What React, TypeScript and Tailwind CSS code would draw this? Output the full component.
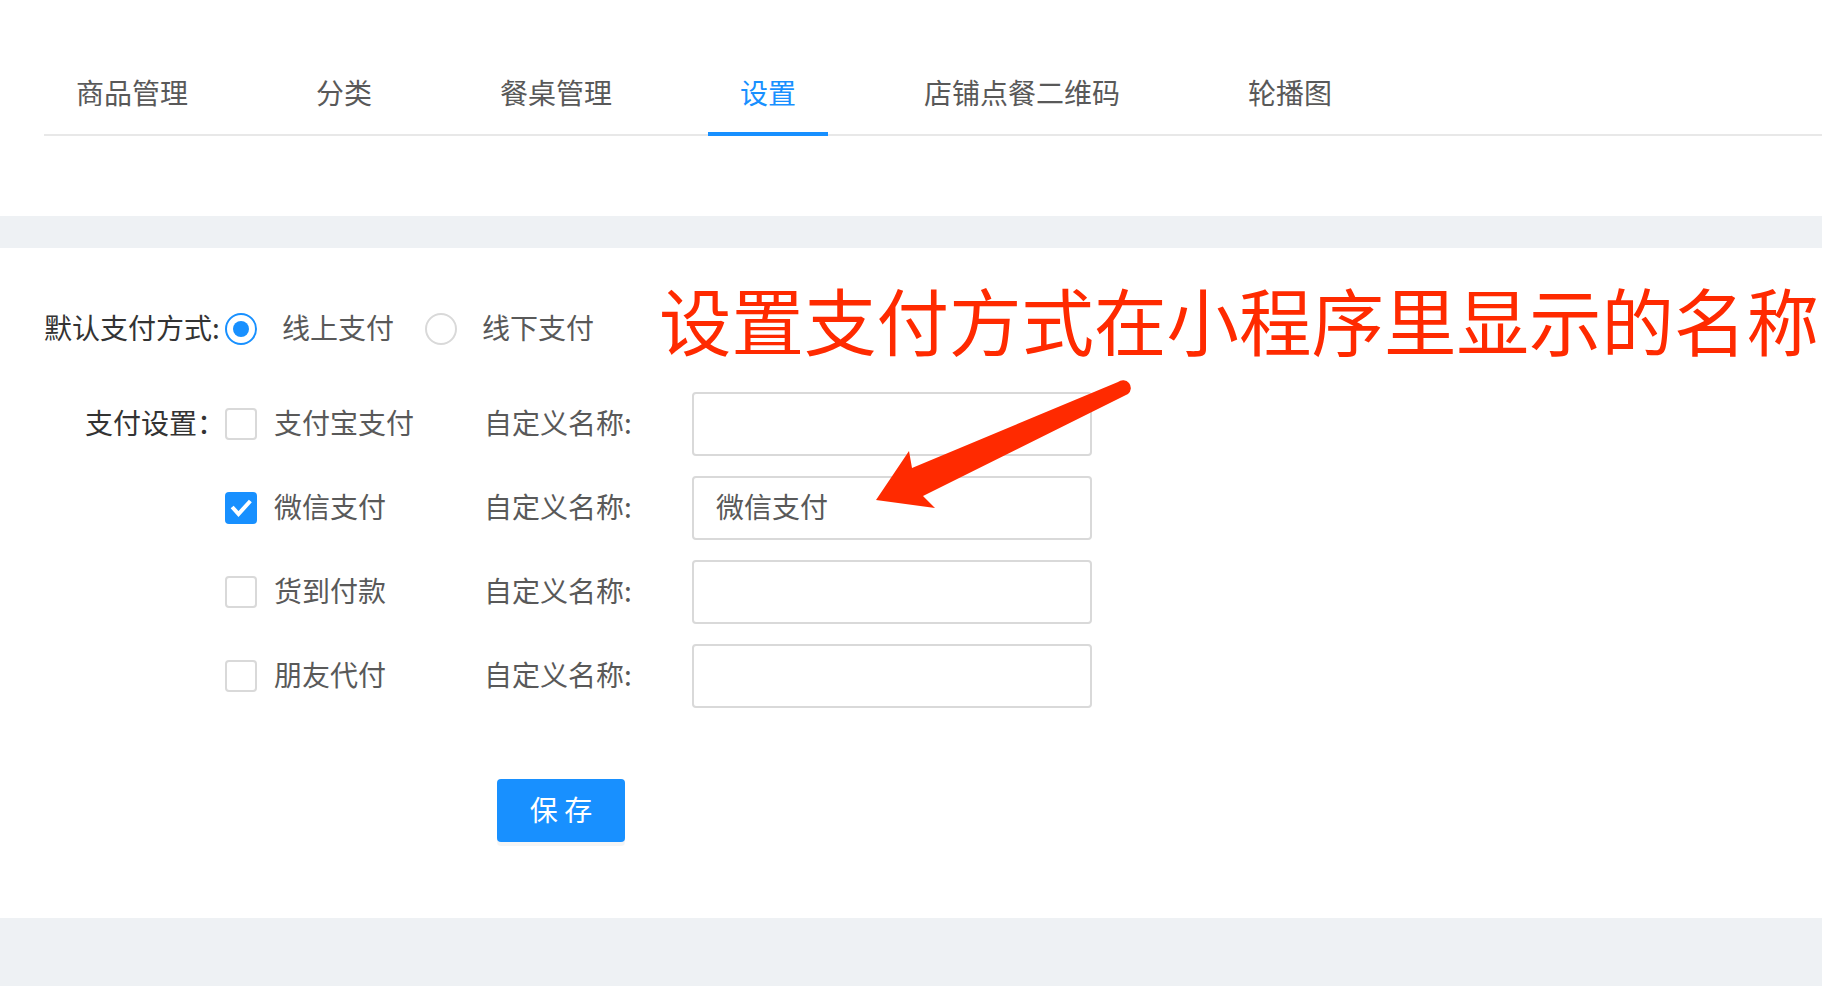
import { useState } from 'react';

const font = { fontFamily: '"Noto Sans CJK SC", "Noto Sans", sans-serif' };

const tabs = ['商品管理', '分类', '餐桌管理', '设置', '店铺点餐二维码', '轮播图'];

const payments = [
  { id: 'alipay', label: '支付宝支付', checked: false, name: '' },
  { id: 'wechat', label: '微信支付', checked: true, name: '微信支付' },
  { id: 'cod', label: '货到付款', checked: false, name: '' },
  { id: 'friend', label: '朋友代付', checked: false, name: '' },
];

const Radio = ({ checked }: { checked: boolean }) => (
  <span
    className={`flex h-[32px] w-[32px] shrink-0 items-center justify-center rounded-full border-2 bg-white ${
      checked ? 'border-[#1890ff]' : 'border-[#d9d9d9]'
    }`}
  >
    {checked && <span className="h-[16px] w-[16px] rounded-full bg-[#1890ff]" />}
  </span>
);

const Checkbox = ({ checked }: { checked: boolean }) =>
  checked ? (
    <span className="flex h-[32px] w-[32px] shrink-0 items-center justify-center rounded-[4px] bg-[#1890ff]">
      <svg width="32" height="32" viewBox="0 0 32 32" fill="none">
        <polyline points="8.5,16.5 13.5,22 24,10.5" stroke="#fff" strokeWidth="4" strokeLinecap="square" />
      </svg>
    </span>
  ) : (
    <span className="h-[32px] w-[32px] shrink-0 rounded-[4px] border-2 border-[#d9d9d9] bg-white" />
  );

export default function App() {
  const [active] = useState(3);

  return (
    <div className="min-h-screen bg-[#eef1f4] text-[28px]" style={font}>
      {/* tabs */}
      <div className="bg-white pb-[80px] pl-[44px] pt-[54px]">
        <div className="flex border-b-2 border-[#e8e8e8]">
          {tabs.map((t, i) => (
            <div
              key={t}
              className={`-mb-[2px] mr-[64px] flex h-[82px] items-center border-b-4 px-[32px] pb-[3px] leading-none ${
                i === active ? 'border-[#1890ff] text-[#1890ff]' : 'border-transparent text-[#595959]'
              }`}
            >
              {t}
            </div>
          ))}
        </div>
      </div>

      {/* settings card */}
      <div className="relative mt-[32px] bg-white px-[44px] pb-[76px] pt-[49px]">
        <div className="flex h-[64px] items-center">
          <div className="w-[181px] whitespace-nowrap pb-[5px] text-[#333]">默认支付方式:</div>
          <div className="flex items-center">
            <Radio checked />
            <span className="ml-[25px] mr-[31px] pb-[5px] text-[#595959]">线上支付</span>
            <Radio checked={false} />
            <span className="ml-[25px] pb-[5px] text-[#595959]">线下支付</span>
          </div>
        </div>

        <div className="mt-[31px] flex flex-col gap-[20px]">
          {payments.map((p, i) => (
            <div key={p.id} className="flex h-[64px] items-center">
              <div className="w-[181px] whitespace-nowrap pb-[5px] text-right text-[#333]">{i === 0 ? '支付设置：' : ''}</div>
              <div className="flex w-[259px] items-center">
                <Checkbox checked={p.checked} />
                <span className="ml-[17px] pb-[5px] text-[#595959]">{p.label}</span>
              </div>
              <div className="w-[208px] whitespace-nowrap pb-[5px] text-[#595959]">自定义名称:</div>
              <input
                readOnly
                value={p.name}
                className="h-[64px] w-[400px] rounded-[4px] border-2 border-[#d9d9d9] bg-white px-[22px] pb-[4px] text-[28px] text-[#595959] outline-none"
                style={font}
              />
            </div>
          ))}
        </div>

        <button
          className="ml-[453px] mt-[71px] flex h-[63px] w-[128px] items-center justify-center rounded-[4px] bg-[#1890ff] pb-[3px] text-[28px] text-white shadow-[0_4px_0_rgba(0,0,0,0.04)]"
          style={font}
        >
          保 存
        </button>

        {/* annotation */}
        <div className="absolute left-[659px] top-[35px] whitespace-nowrap text-[72.5px] leading-none text-[#ff2a00]">
          设置支付方式在小程序里显示的名称
        </div>
        <svg
          className="absolute left-[860px] top-[122px]"
          width="290"
          height="150"
          viewBox="0 0 290 150"
        >
          <path
            d="M258,12 L52,98 L49,81 L16,130 L75,138 L63,126 L268,24 A6.5,6.5 0 0 0 258,12 Z"
            fill="#ff2a00"
          />
        </svg>
      </div>
    </div>
  );
}
